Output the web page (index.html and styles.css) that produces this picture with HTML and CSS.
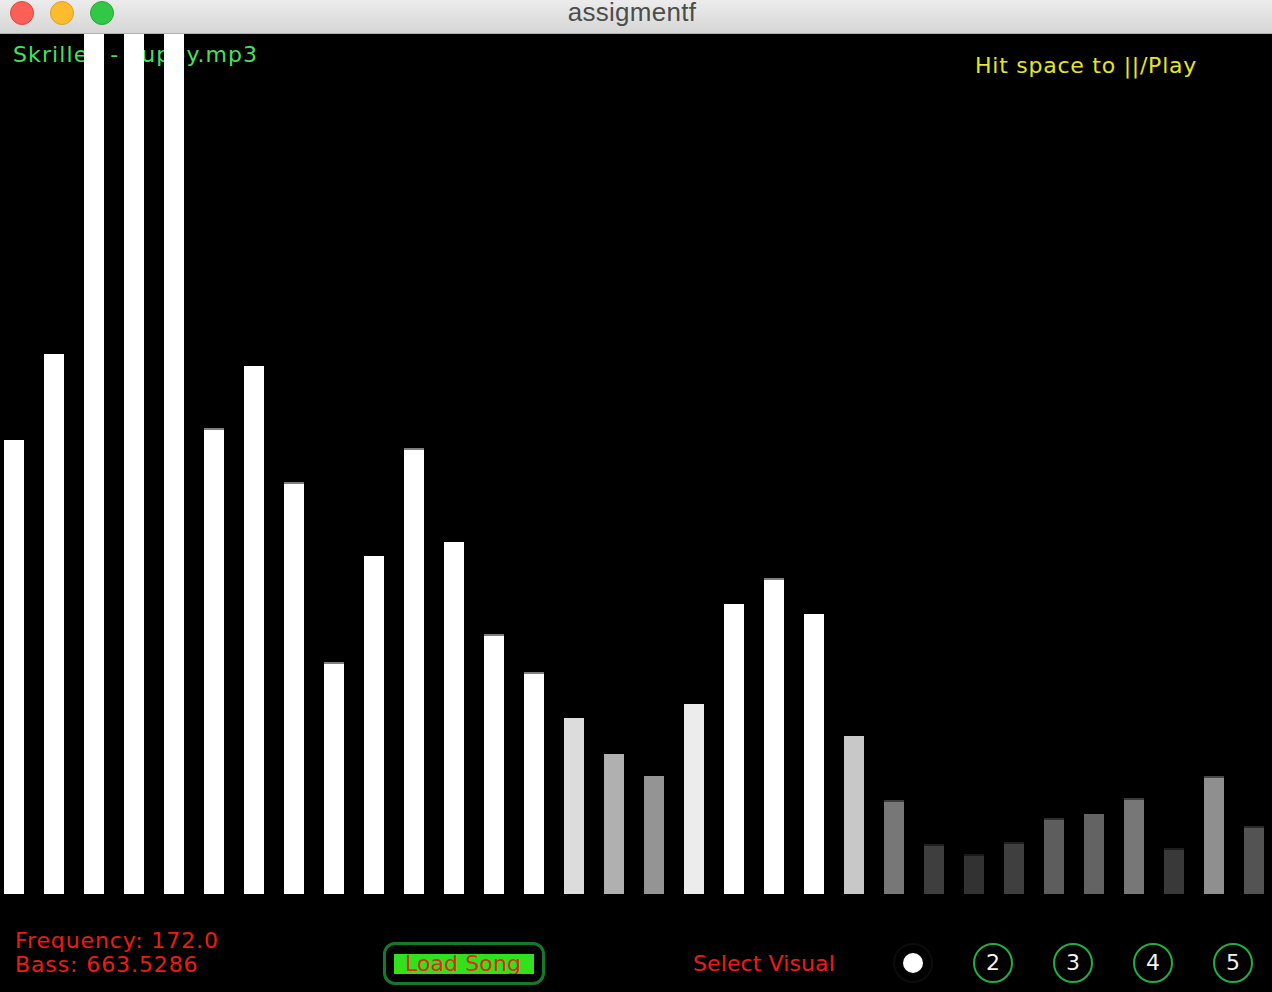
FILE: index.html
```html
<!DOCTYPE html>
<html>
<head>
<meta charset="utf-8">
<title>assigmentf</title>
<link rel="stylesheet" href="styles.css">
</head>
<body>
<div class="window">
  <div class="titlebar">
    <div class="lights">
      <span class="light red"></span>
      <span class="light yellow"></span>
      <span class="light green"></span>
    </div>
    <div class="title">assigmentf</div>
    <div></div>
  </div>
  <div class="canvas">
    <div class="song">Skrillex - Puppy.mp3</div>
    <div class="hint">Hit space to ||/Play</div>
    <div class="bars">
      <div class="bar" style="height:454px;background:#fff"></div>
      <div class="bar" style="height:540px;background:#fff"></div>
      <div class="bar" style="height:860px;background:#fff"></div>
      <div class="bar" style="height:860px;background:#fff"></div>
      <div class="bar" style="height:860px;background:#fff"></div>
      <div class="bar edge" style="height:466px;background:#fff"></div>
      <div class="bar" style="height:528px;background:#fff"></div>
      <div class="bar edge" style="height:412px;background:#fff"></div>
      <div class="bar edge" style="height:232px;background:#fff"></div>
      <div class="bar" style="height:338px;background:#fff"></div>
      <div class="bar edge" style="height:446px;background:#fff"></div>
      <div class="bar" style="height:352px;background:#fff"></div>
      <div class="bar edge" style="height:260px;background:#fff"></div>
      <div class="bar edge" style="height:222px;background:#fff"></div>
      <div class="bar" style="height:176px;background:#dcdcdc"></div>
      <div class="bar" style="height:140px;background:#b0b0b0"></div>
      <div class="bar" style="height:118px;background:#949494"></div>
      <div class="bar" style="height:190px;background:#ececec"></div>
      <div class="bar" style="height:290px;background:#fff"></div>
      <div class="bar edge" style="height:316px;background:#fff"></div>
      <div class="bar" style="height:280px;background:#fff"></div>
      <div class="bar" style="height:158px;background:#c8c8c8"></div>
      <div class="bar edge" style="height:94px;background:#777"></div>
      <div class="bar edge" style="height:50px;background:#3e3e3e"></div>
      <div class="bar edge" style="height:40px;background:#323232"></div>
      <div class="bar edge" style="height:52px;background:#3f3f3f"></div>
      <div class="bar edge" style="height:76px;background:#5d5d5d"></div>
      <div class="bar" style="height:80px;background:#636363"></div>
      <div class="bar edge" style="height:96px;background:#777"></div>
      <div class="bar edge" style="height:46px;background:#393939"></div>
      <div class="bar edge" style="height:118px;background:#8f8f8f"></div>
      <div class="bar edge" style="height:68px;background:#535353"></div>
    </div>
    <div class="controls">
      <div class="stats">
        <div>Frequency: 172.0</div>
        <div>Bass: 663.5286</div>
      </div>
      <div class="load"><div class="load-inner">Load Song</div></div>
      <div class="select">Select Visual</div>
      <div class="visuals">
        <div class="vis active"><span class="dot"></span></div>
        <div class="vis">2</div>
        <div class="vis">3</div>
        <div class="vis">4</div>
        <div class="vis">5</div>
      </div>
    </div>
  </div>
</div>
</body>
</html>
```

FILE: styles.css
```css
html, body {
  margin: 0;
  padding: 0;
  background: #000;
}

.window {
  width: 1272px;
  height: 992px;
  overflow: hidden;
  display: flex;
  flex-direction: column;
}

.titlebar {
  height: 33px;
  border-bottom: 1px solid #b1b1b1;
  background: linear-gradient(#ececec, #d6d6d6);
  display: grid;
  grid-template-columns: 1fr auto 1fr;
  align-items: start;
}

.lights {
  display: flex;
  gap: 16px;
  padding-left: 10px;
  padding-top: 1px;
}

.light {
  width: 24px;
  height: 24px;
  border-radius: 50%;
  box-sizing: border-box;
}

.light.red { background: #fc5f57; border: 1px solid #e2463f; }
.light.yellow { background: #fdbc2e; border: 1px solid #df9f25; }
.light.green { background: #33c748; border: 1px solid #22a832; }

.title {
  font-family: "Liberation Sans", Arial, sans-serif;
  font-size: 26px;
  line-height: 30px;
  margin-top: -3px;
  color: #4d4d4d;
  margin-right: 8px;
  letter-spacing: 0.3px;
}

.canvas {
  position: relative;
  flex: 1;
  background: #000;
  font-family: "DejaVu Sans", sans-serif;
  font-size: 22px;
  line-height: 24px;
  letter-spacing: 0.6px;
}

.song {
  position: absolute;
  left: 13px;
  top: 9px;
  color: #48e05c;
  letter-spacing: 1.1px;
  z-index: 0;
}

.hint {
  position: absolute;
  left: 975px;
  top: 20px;
  color: #e6e61e;
  letter-spacing: 0.75px;
}

.bars {
  position: relative;
  z-index: 1;
  height: 860px;
  display: flex;
  align-items: flex-end;
  gap: 20px;
  padding-left: 4px;
}

.bar {
  width: 20px;
  flex: none;
}

.bar.edge {
  box-shadow: inset 0 2px 0 rgba(0, 0, 0, 0.5);
}

.controls {
  height: 98px;
  display: flex;
  align-items: flex-start;
}

.stats {
  width: 368px;
  padding-left: 15px;
  margin-top: 35px;
  color: #ec1c14;
  letter-spacing: 0.9px;
}

.load {
  box-sizing: border-box;
  width: 162px;
  height: 43px;
  margin-top: 48px;
  border: 3px solid #137a2d;
  border-radius: 12px;
  padding: 9px 8px 8px 8px;
}

.load-inner {
  height: 20px;
  background: #33e01c;
  color: #e3281c;
  line-height: 20px;
  padding-left: 11px;
  letter-spacing: 0.1px;
  overflow: hidden;
}

.select {
  margin-left: 148px;
  margin-top: 58px;
  width: 200px;
  color: #ec1c14;
  letter-spacing: 0.1px;
}

.visuals {
  display: flex;
  gap: 40px;
  margin-top: 49px;
}

.vis {
  box-sizing: border-box;
  width: 40px;
  height: 40px;
  border-radius: 50%;
  border: 2px solid #1fae42;
  color: #f2f2f2;
  display: flex;
  align-items: center;
  justify-content: center;
  letter-spacing: 0;
}

.vis.active {
  border-color: #0c0c0c;
}

.dot {
  width: 20px;
  height: 20px;
  border-radius: 50%;
  background: #fff;
}
```
